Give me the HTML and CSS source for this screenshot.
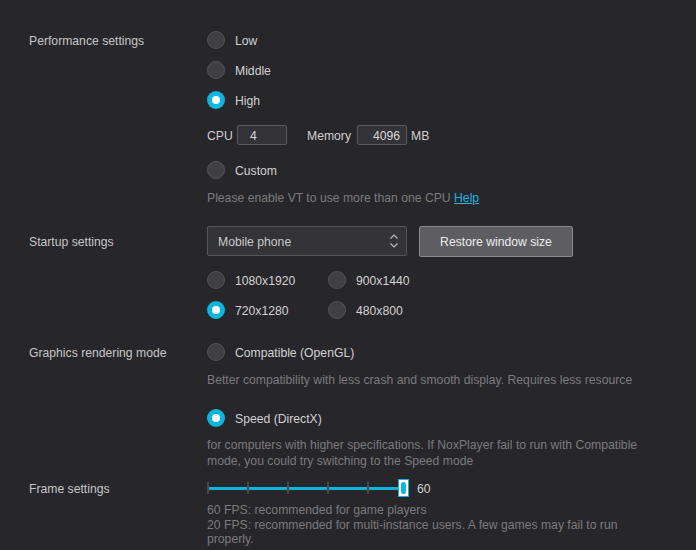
FILE: index.html
```html
<!DOCTYPE html>
<html>
<head>
<meta charset="utf-8">
<link rel="stylesheet" href="styles.css">
</head>
<body>
<div class="page">
  <section class="sec sec-perf">
    <div class="label">Performance settings</div>
    <div class="content">
      <div class="opt"><span class="radio"></span><span class="txt">Low</span></div>
      <div class="opt"><span class="radio"></span><span class="txt">Middle</span></div>
      <div class="opt"><span class="radio on"></span><span class="txt">High</span></div>
      <div class="cpu-row">
        <span class="txt cpu-label">CPU</span><span class="box">4</span>
        <span class="txt mem-label">Memory</span><span class="box right">4096</span><span class="txt mb">MB</span>
      </div>
      <div class="opt mt5"><span class="radio"></span><span class="txt">Custom</span></div>
      <div class="hint">Please enable VT to use more than one CPU <a class="help">Help</a></div>
    </div>
  </section>

  <section class="sec sec-startup">
    <div class="label">Startup settings</div>
    <div class="content">
      <div class="startup-row">
        <div class="select">
          <span class="txt">Mobile phone</span>
          <svg class="arrows" width="10" height="16" viewBox="0 0 10 16"><path d="M1.5 5.5 L5 2 L8.5 5.5 M1.5 10.5 L5 14 L8.5 10.5" fill="none" stroke="#bdbdbd" stroke-width="1.2"/></svg>
        </div>
        <div class="button"><span class="txt">Restore window size</span></div>
      </div>
      <div class="res-grid">
        <div class="opt"><span class="radio"></span><span class="txt">1080x1920</span></div>
        <div class="opt"><span class="radio"></span><span class="txt">900x1440</span></div>
        <div class="opt"><span class="radio on"></span><span class="txt">720x1280</span></div>
        <div class="opt"><span class="radio"></span><span class="txt">480x800</span></div>
      </div>
    </div>
  </section>

  <section class="sec sec-graphics">
    <div class="label">Graphics rendering mode</div>
    <div class="content">
      <div class="opt"><span class="radio"></span><span class="txt">Compatible (OpenGL)</span></div>
      <div class="hint">Better compatibility with less crash and smooth display. Requires less resource</div>
      <div class="opt mt15"><span class="radio on"></span><span class="txt">Speed (DirectX)</span></div>
      <div class="hint hint2">for computers with higher specifications. If NoxPlayer fail to run with Compatible<br>mode, you could try switching to the Speed mode</div>
    </div>
  </section>

  <section class="sec sec-frame">
    <div class="label">Frame settings</div>
    <div class="content">
      <div class="slider-row">
        <div class="slider">
          <span class="track"></span>
          <span class="tick"></span><span class="tick"></span><span class="tick"></span><span class="tick"></span><span class="tick"></span>
          <span class="thumb"><span class="pill"></span></span>
        </div>
        <span class="txt val">60</span>
      </div>
      <div class="hint hint3">60 FPS: recommended for game players<br>20 FPS: recommended for multi-instance users. A few games may fail to run<br>properly.</div>
    </div>
  </section>
</div>
</body>
</html>
```

FILE: styles.css
```css
html, body {
  margin: 0;
  padding: 0;
  background: #27262b;
}
body {
  font-family: "Liberation Sans", Arial, sans-serif;
  font-size: 12.2px;
  color: #cfcfcf;
  width: 696px;
  height: 550px;
  overflow: hidden;
}
.page {
  padding: 25px 0 0 29px;
}
.sec {
  display: grid;
  grid-template-columns: 178px 1fr;
}
.label {
  color: #c6c6c6;
  height: 30px;
  line-height: 32px;
}
.content {
  display: flex;
  flex-direction: column;
}
.txt {
  padding-top: 2px;
}
.opt {
  display: flex;
  align-items: center;
  height: 30px;
  gap: 10px;
  color: #d2d2d2;
}
.radio {
  width: 16px;
  height: 16px;
  border-radius: 50%;
  background: #3f3f44;
  border: 1px solid #535358;
  flex: none;
}
.radio.on {
  background: #ffffff;
  border: 5px solid #0cb6de;
  width: 8px;
  height: 8px;
}
.mt5 { margin-top: 5px; }
.mt15 { margin-top: 15px; }
.cpu-row {
  display: flex;
  align-items: center;
  height: 30px;
  margin-top: 5px;
  color: #cfcfcf;
}
.box {
  width: 48px;
  height: 18px;
  border: 1px solid #5a5a5f;
  border-radius: 2px;
  background: #333338;
  color: #d8d8d8;
  line-height: 20px;
  text-indent: 12px;
}
.box.right {
  text-align: right;
  text-indent: 0;
  width: 42px;
  padding-right: 6px;
}
.cpu-label { width: 30px; }
.mem-label { margin-left: 20px; width: 50px; }
.mb { margin-left: 4px; }
.hint {
  color: #7b7b7b;
  line-height: 16px;
  margin-top: 3px;
  padding-top: 2px;
  height: 16px;
}
.hint2 { line-height: 15.5px; height: 30px; }
.hint3 { line-height: 14.5px; height: 44px; }
.help {
  color: #1cb5e0;
  text-decoration: underline;
}
.sec-startup { margin-top: 20px; }
.startup-row {
  display: flex;
  align-items: center;
  gap: 12px;
  height: 30px;
}
.select {
  width: 200px;
  height: 30px;
  border: 1px solid #56565b;
  border-radius: 2px;
  background: #333338;
  display: flex;
  align-items: center;
  justify-content: space-between;
  padding: 0 7px 0 10px;
  box-sizing: border-box;
  color: #cacaca;
}
.arrows { display: block; }
.button {
  width: 154px;
  height: 31px;
  box-sizing: border-box;
  border: 1px solid #8c8c90;
  border-radius: 2px;
  background: #5e5e62;
  color: #ececec;
  display: flex;
  align-items: center;
  justify-content: center;
}
.res-grid {
  display: grid;
  grid-template-columns: 121px 1fr;
  margin-top: 9px;
}
.sec-graphics { margin-top: 12px; }
.sec-frame { margin-top: 10px; }
.sec-frame .label { height: 20px; line-height: 22px; }
.slider-row {
  display: flex;
  align-items: center;
  height: 20px;
}
.slider {
  position: relative;
  width: 202px;
  height: 20px;
}
.track {
  position: absolute;
  left: 0;
  top: 9px;
  width: 195px;
  height: 3px;
  background: #10b4dc;
}
.tick {
  position: absolute;
  top: 4px;
  width: 2px;
  height: 12px;
  background: #48484d;
}
.tick:nth-of-type(2) { left: 0; }
.tick:nth-of-type(3) { left: 40px; }
.tick:nth-of-type(4) { left: 80px; }
.tick:nth-of-type(5) { left: 120px; }
.tick:nth-of-type(6) { left: 160px; }
.thumb {
  position: absolute;
  left: 191px;
  top: 1px;
  width: 11px;
  height: 18px;
  box-sizing: border-box;
  border: 1px solid #10b4dc;
  background: #ffffff;
  display: flex;
  align-items: center;
  justify-content: center;
}
.pill {
  width: 5px;
  height: 12px;
  border-radius: 3px;
  background: #10b4dc;
}
.val {
  margin-left: 8px;
  color: #cfcfcf;
}
```
